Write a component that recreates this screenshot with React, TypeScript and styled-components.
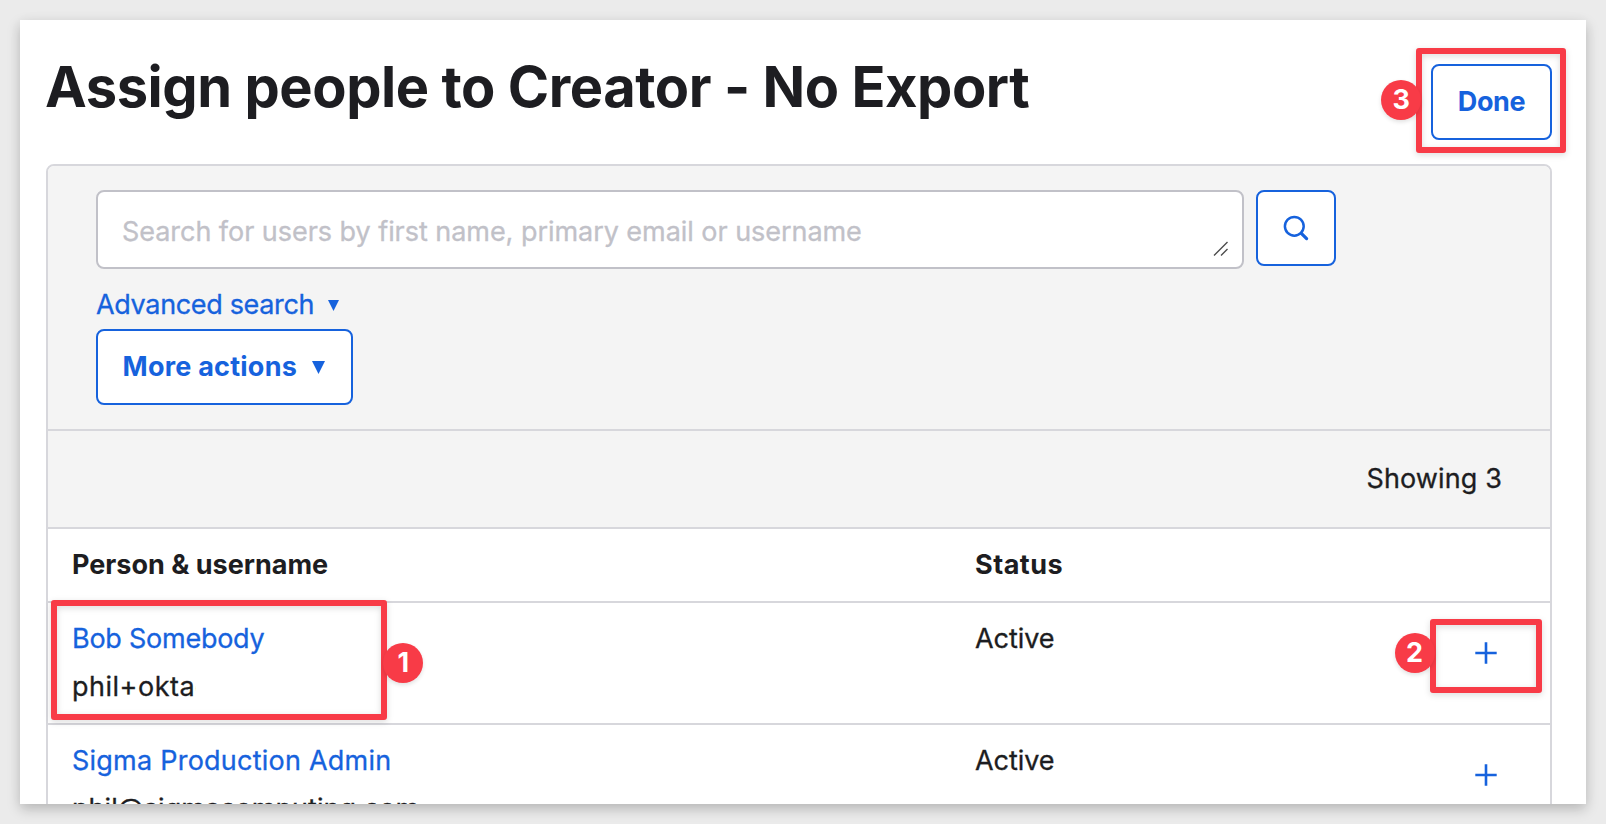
import React from 'react';
import styled, { createGlobalStyle } from 'styled-components';

const GlobalStyle = createGlobalStyle`
  *, *::before, *::after { box-sizing: border-box; }
  html, body { margin: 0; }
  body {
    background: #ebebeb;
    color: #1d1d21;
    font-family: Inter, "Liberation Sans", sans-serif;
    font-size: 27px;
    font-weight: 400;
    line-height: 48px;
    -webkit-text-stroke: 0.3px;
    overflow: hidden;
  }
  button, textarea { font: inherit; margin: 0; }
`;

const blue = '#1662dd';
const line = '#d7d7dc';
const red = '#f83b47';

const Page = styled.main`
  position: relative;
  width: 1606px;
  height: 824px;
  padding: 20px;
`;

const Card = styled.section`
  height: 784px;
  padding: 0 34px 0 26px;
  overflow: hidden;
  background: #fff;
  box-shadow: 0 5px 12px rgba(0, 0, 0, 0.22), 0 0 20px rgba(0, 0, 0, 0.02);
`;

const Header = styled.header`
  display: flex;
  justify-content: space-between;
  align-items: flex-start;
  height: 144px;
`;

const Title = styled.h1`
  margin: 23px 0 0 -1px;
  font-size: 56px;
  line-height: 88px;
  font-weight: 700;
  letter-spacing: -0.44px;
  -webkit-text-stroke: 0;
  white-space: nowrap;
`;

const Button = styled.button<{ $width: number; $tracking?: number }>`
  display: flex;
  align-items: center;
  justify-content: center;
  width: ${(p) => p.$width}px;
  height: 76px;
  padding: 0;
  border: 2px solid ${blue};
  border-radius: 8px;
  background: #fff;
  color: ${blue};
  font-weight: 700;
  letter-spacing: ${(p) => p.$tracking ?? 0}px;
  -webkit-text-stroke: 0;
`;

const DoneButton = styled(Button)`
  margin-top: 44px;
`;

const MoreButton = styled(Button)`
  justify-content: flex-start;
  padding-left: 24.5px;
`;

const Panel = styled.div`
  height: 700px;
  border: 2px solid ${line};
  border-radius: 8px 8px 0 0;
  overflow: hidden;
`;

const Toolbar = styled.div`
  display: flex;
  flex-direction: column;
  align-items: flex-start;
  height: 265px;
  padding: 24px 48px 0;
  border-bottom: 2px solid ${line};
  background: #f4f4f4;
`;

const SearchRow = styled.div`
  display: flex;
  align-items: flex-start;
  gap: 12px;
  height: 79px;
`;

const SearchField = styled.div`
  position: relative;
  width: 1148px;
  height: 79px;
`;

const SearchInput = styled.textarea`
  display: block;
  width: 100%;
  height: 100%;
  padding: 16px 24px 10px;
  border: 2px solid #c1c1c8;
  border-radius: 8px;
  background: #fff;
  resize: none;
  overflow: hidden;
  letter-spacing: -0.045px;
  &::placeholder { color: #c1c1c8; opacity: 1; }
`;

const ResizeGrip = styled.svg`
  position: absolute;
  right: 16px;
  bottom: 13px;
`;

const AdvancedLink = styled.a`
  display: flex;
  align-items: center;
  height: 48px;
  margin-top: 12px;
  color: ${blue};
  letter-spacing: -0.34px;
`;

const Caret = styled.svg<{ $gap: number }>`
  margin-left: ${(p) => p.$gap}px;
`;

const Summary = styled.div`
  display: flex;
  justify-content: flex-end;
  height: 98px;
  padding: 24px 48px 0 0;
  border-bottom: 2px solid ${line};
  background: #f4f4f4;
  letter-spacing: 0.12px;
`;

const Row = styled.div`
  display: grid;
  grid-template-columns: 903px 309px 290px;
  height: 122px;
  border-bottom: 2px solid ${line};
`;

const HeadRow = styled(Row)`
  height: 74px;
  font-weight: 700;
  -webkit-text-stroke: 0;
`;

const Cell = styled.div<{ $tracking?: number }>`
  padding: 12px 0 0 24px;
  letter-spacing: ${(p) => p.$tracking ?? 0}px;
  white-space: nowrap;
`;

const PersonLink = styled.a<{ $tracking: number }>`
  display: block;
  color: ${blue};
  letter-spacing: ${(p) => p.$tracking}px;
`;

const Username = styled.div<{ $tracking: number; $clip?: number }>`
  width: ${(p) => (p.$clip ? `${p.$clip}px` : 'auto')};
  overflow: hidden;
  letter-spacing: ${(p) => p.$tracking}px;
`;

const AddCell = styled.div`
  display: flex;
  justify-content: flex-end;
  padding: 39px 53px 0 0;
`;

const Highlight = styled.div<{ $x: number; $y: number; $w: number; $h: number }>`
  position: absolute;
  left: ${(p) => p.$x}px;
  top: ${(p) => p.$y}px;
  width: ${(p) => p.$w}px;
  height: ${(p) => p.$h}px;
  border: 6px solid ${red};
  border-radius: 3px;
  filter: drop-shadow(0 2px 3px rgba(0, 0, 0, 0.14));
`;

const Badge = styled.div<{ $x: number; $y: number }>`
  position: absolute;
  left: ${(p) => p.$x}px;
  top: ${(p) => p.$y}px;
  width: 40px;
  height: 40px;
  border-radius: 50%;
  background: ${red};
  box-shadow: 0 2px 4px rgba(0, 0, 0, 0.12);
  color: #fff;
  font-weight: 700;
  line-height: 40px;
  text-align: center;
  -webkit-text-stroke: 0;
`;

const Plus = () => (
  <svg width="22" height="22" viewBox="0 0 22 22" fill="none" stroke={blue} strokeWidth="2.6">
    <path d="M11 0.3V21.7M0.3 11H21.7" />
  </svg>
);

const people = [
  { name: 'Bob Somebody', nameTracking: -0.25, username: 'phil+oktac', userTracking: 0.5, clip: 123.5, status: 'Active' },
  { name: 'Sigma Production Admin', nameTracking: 0.23, username: 'phil@sigmacomputing.com', userTracking: 0.03, status: 'Active' },
];

const steps = [
  { n: 1, box: [51.3, 599.5, 336.2, 120.5], badge: [383.3, 643.3] },
  { n: 2, box: [1429.5, 619, 112.5, 73.5], badge: [1394.5, 632.5] },
  { n: 3, box: [1416, 47.5, 150, 105.5], badge: [1381.3, 80] },
];

export default function App() {
  return (
    <>
      <GlobalStyle />
      <Page>
        <Card>
          <Header>
            <Title>Assign people to Creator - No Export</Title>
            <DoneButton $width={121} $tracking={-0.4}>Done</DoneButton>
          </Header>
          <Panel>
            <Toolbar>
              <SearchRow>
                <SearchField>
                  <SearchInput placeholder="Search for users by first name, primary email or username" />
                  <ResizeGrip width="15" height="15" viewBox="0 0 15 15" fill="none" stroke="#4d4d4d" strokeWidth="1.4">
                    <path d="M1 14.5L14.5 1M8 14.5L14.5 8" />
                  </ResizeGrip>
                </SearchField>
                <Button $width={80} aria-label="Search">
                  <svg width="26" height="26" viewBox="0 0 26 26" fill="none" stroke={blue} strokeLinecap="round">
                    <circle cx="11.3" cy="11.3" r="9.4" strokeWidth="2.5" />
                    <path d="M18.3 18.3L23.6 23.6" strokeWidth="3.2" />
                  </svg>
                </Button>
              </SearchRow>
              <AdvancedLink>
                Advanced search
                <Caret $gap={13.5} width="11" height="11" viewBox="0 0 11 11" fill={blue}>
                  <path d="M0 0H11L5.5 11Z" />
                </Caret>
              </AdvancedLink>
              <MoreButton $width={257} $tracking={0.23}>
                More actions
                <Caret $gap={14.5} width="13" height="13" viewBox="0 0 13 13" fill={blue}>
                  <path d="M0 0H13L6.5 13Z" />
                </Caret>
              </MoreButton>
            </Toolbar>
            <Summary>Showing 3</Summary>
            <HeadRow>
              <Cell $tracking={0}>Person &amp; username</Cell>
              <Cell $tracking={0.5}>Status</Cell>
            </HeadRow>
            {people.map((p) => (
              <Row key={p.name}>
                <Cell>
                  <PersonLink $tracking={p.nameTracking}>{p.name}</PersonLink>
                  <Username $tracking={p.userTracking} $clip={p.clip}>{p.username}</Username>
                </Cell>
                <Cell $tracking={-0.05}>{p.status}</Cell>
                <AddCell><Plus /></AddCell>
              </Row>
            ))}
          </Panel>
        </Card>
        {steps.map((s) => (
          <React.Fragment key={s.n}>
            <Highlight $x={s.box[0]} $y={s.box[1]} $w={s.box[2]} $h={s.box[3]} />
            <Badge $x={s.badge[0]} $y={s.badge[1]}>{s.n}</Badge>
          </React.Fragment>
        ))}
      </Page>
    </>
  );
}
